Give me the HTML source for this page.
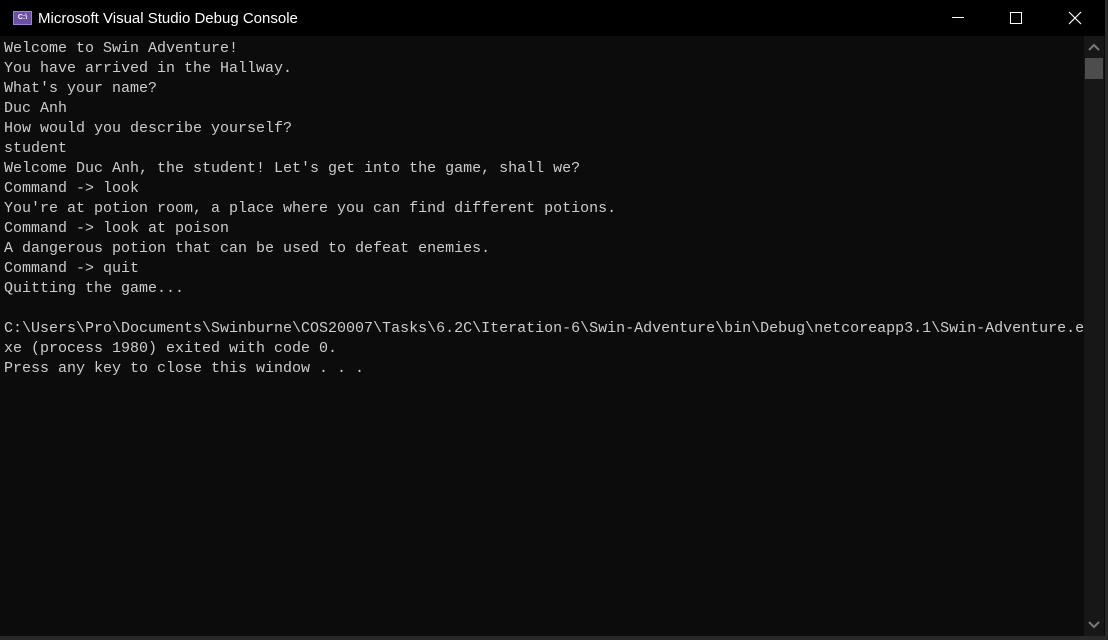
<!DOCTYPE html>
<html><head><meta charset="utf-8"><style>
html,body{margin:0;padding:0;width:1108px;height:640px;overflow:hidden;background:#0c0c0c;}
#title{position:absolute;left:0;top:0;width:1108px;height:36px;background:#000;}
#ttext{position:absolute;left:38px;top:10px;font:15px "Liberation Sans",sans-serif;color:#fff;}
#icon{position:absolute;left:13px;top:11px;width:19px;height:14px;background:#6b4fa8;border:1px solid #9a86cc;box-sizing:border-box;font:bold 7px "Liberation Sans",sans-serif;color:#fff;text-align:center;line-height:12px;}
#con{position:absolute;left:4px;top:39px;font:15px/20px "Liberation Mono",monospace;color:#cccccc;white-space:pre;}
#sb{position:absolute;left:1084px;top:36px;width:20px;height:600px;background:#171717;}
#thumb{position:absolute;left:1085px;top:58px;width:18px;height:21px;background:#4d4d4d;}
#rb{position:absolute;left:1105px;top:0;width:3px;height:640px;background:#2a2a2a;}
#bb{position:absolute;left:0;top:636px;width:1108px;height:4px;background:#2a2a2a;}
</style></head><body>
<div id="title"><div id="icon">C:\</div><div id="ttext">Microsoft Visual Studio Debug Console</div>
<svg style="position:absolute;left:940px;top:0" width="168" height="36">
<line x1="12" y1="17.5" x2="24" y2="17.5" stroke="#fff" stroke-width="1"/>
<rect x="70.5" y="12.5" width="11" height="11" fill="none" stroke="#fff" stroke-width="1"/>
<line x1="129" y1="12" x2="141" y2="24" stroke="#fff" stroke-width="1.2"/>
<line x1="141" y1="12" x2="129" y2="24" stroke="#fff" stroke-width="1.2"/>
</svg></div>
<div id="con">Welcome to Swin Adventure!
You have arrived in the Hallway.
What's your name?
Duc Anh
How would you describe yourself?
student
Welcome Duc Anh, the student! Let's get into the game, shall we?
Command -&gt; look
You're at potion room, a place where you can find different potions.
Command -&gt; look at poison
A dangerous potion that can be used to defeat enemies.
Command -&gt; quit
Quitting the game...

C:\Users\Pro\Documents\Swinburne\COS20007\Tasks\6.2C\Iteration-6\Swin-Adventure\bin\Debug\netcoreapp3.1\Swin-Adventure.e
xe (process 1980) exited with code 0.
Press any key to close this window . . .</div>
<div id="sb"></div><div id="thumb"></div>
<svg style="position:absolute;left:1084px;top:40px" width="20" height="14"><polyline points="5,10 10,5 15,10" fill="none" stroke="#7a7a7a" stroke-width="2"/></svg>
<svg style="position:absolute;left:1084px;top:618px" width="20" height="14"><polyline points="5,4 10,9 15,4" fill="none" stroke="#7a7a7a" stroke-width="2"/></svg>
<div id="rb"></div><div id="bb"></div>
</body></html>
